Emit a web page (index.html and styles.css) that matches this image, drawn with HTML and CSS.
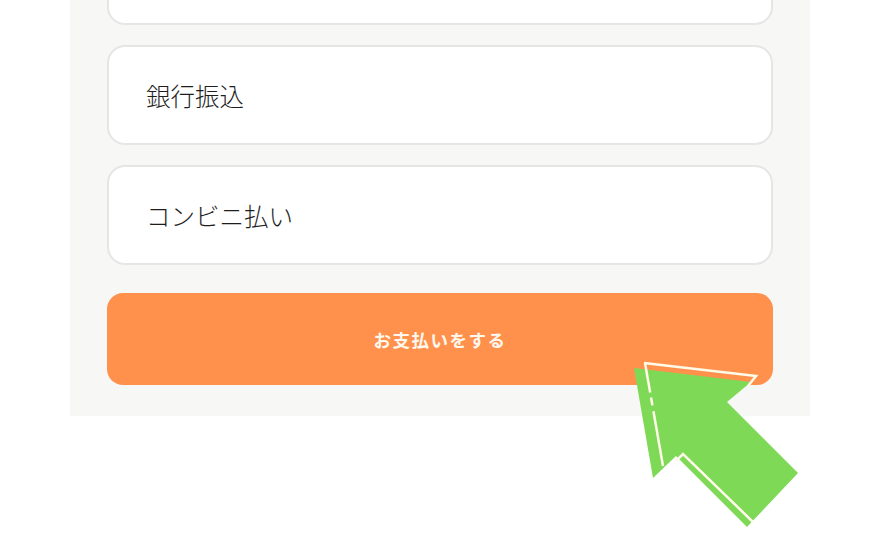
FILE: index.html
```html
<!DOCTYPE html>
<html lang="ja">
<head>
  <meta charset="utf-8">
  <title>お支払い方法</title>
  <link rel="stylesheet" href="styles.css">
</head>
<body>

  <div class="panel">
    <div class="method first"></div>
    <div class="method"><span>銀行振込</span></div>
    <div class="method"><span>コンビニ払い</span></div>
    <button class="pay">お支払いをする</button>
  </div>

  <!-- pointer arrow over the button -->
  <svg class="arrow" width="880" height="543" viewBox="0 0 880 543">
    <polygon fill="#7ed957" points="634,368 751,382 727,402 798,473 747,527 676,456 653,478"/>
    <polyline fill="none" stroke="#fffbe8" stroke-width="2.5" points="644,363 756,376 748,386"/>
    <polyline fill="none" stroke="#fffbe8" stroke-width="2.5" stroke-dasharray="30,5,8,6,200" points="645,363 663,466"/>
    <polyline fill="none" stroke="#fffbe8" stroke-width="2.5" points="676,461 683,454 753,522"/>
  </svg>

</body>
</html>
```

FILE: styles.css
```css
body {
  margin: 0;
  background: #fff;
  font-family: "Noto Sans CJK JP", "Noto Sans", sans-serif;
  overflow: hidden;
}

.panel {
  width: 666px;
  margin-left: 70px;
  padding: 0 37px 31px;
  background: #f7f7f5;
  display: flex;
  flex-direction: column;
  gap: 20px;
}

.method {
  box-sizing: border-box;
  height: 100px;
  background: #fff;
  border: 2px solid #e6e6e4;
  border-radius: 18px;
  display: flex;
  align-items: center;
  padding-left: 37px;
  font-size: 24.5px;
  font-weight: 300;
  color: #1e1e1e;
}

/* list is scrolled, only the bottom of the first card shows */
.method.first {
  margin-top: -75px;
}

.pay {
  margin-top: 8px;
  height: 92px;
  border: none;
  border-radius: 16px;
  background: #ff914d;
  color: #fff8ee;
  font-family: inherit;
  font-size: 17.5px;
  font-weight: bold;
  letter-spacing: 1.5px;
}

.arrow {
  position: absolute;
  left: 0;
  top: 0;
  pointer-events: none;
}
```
